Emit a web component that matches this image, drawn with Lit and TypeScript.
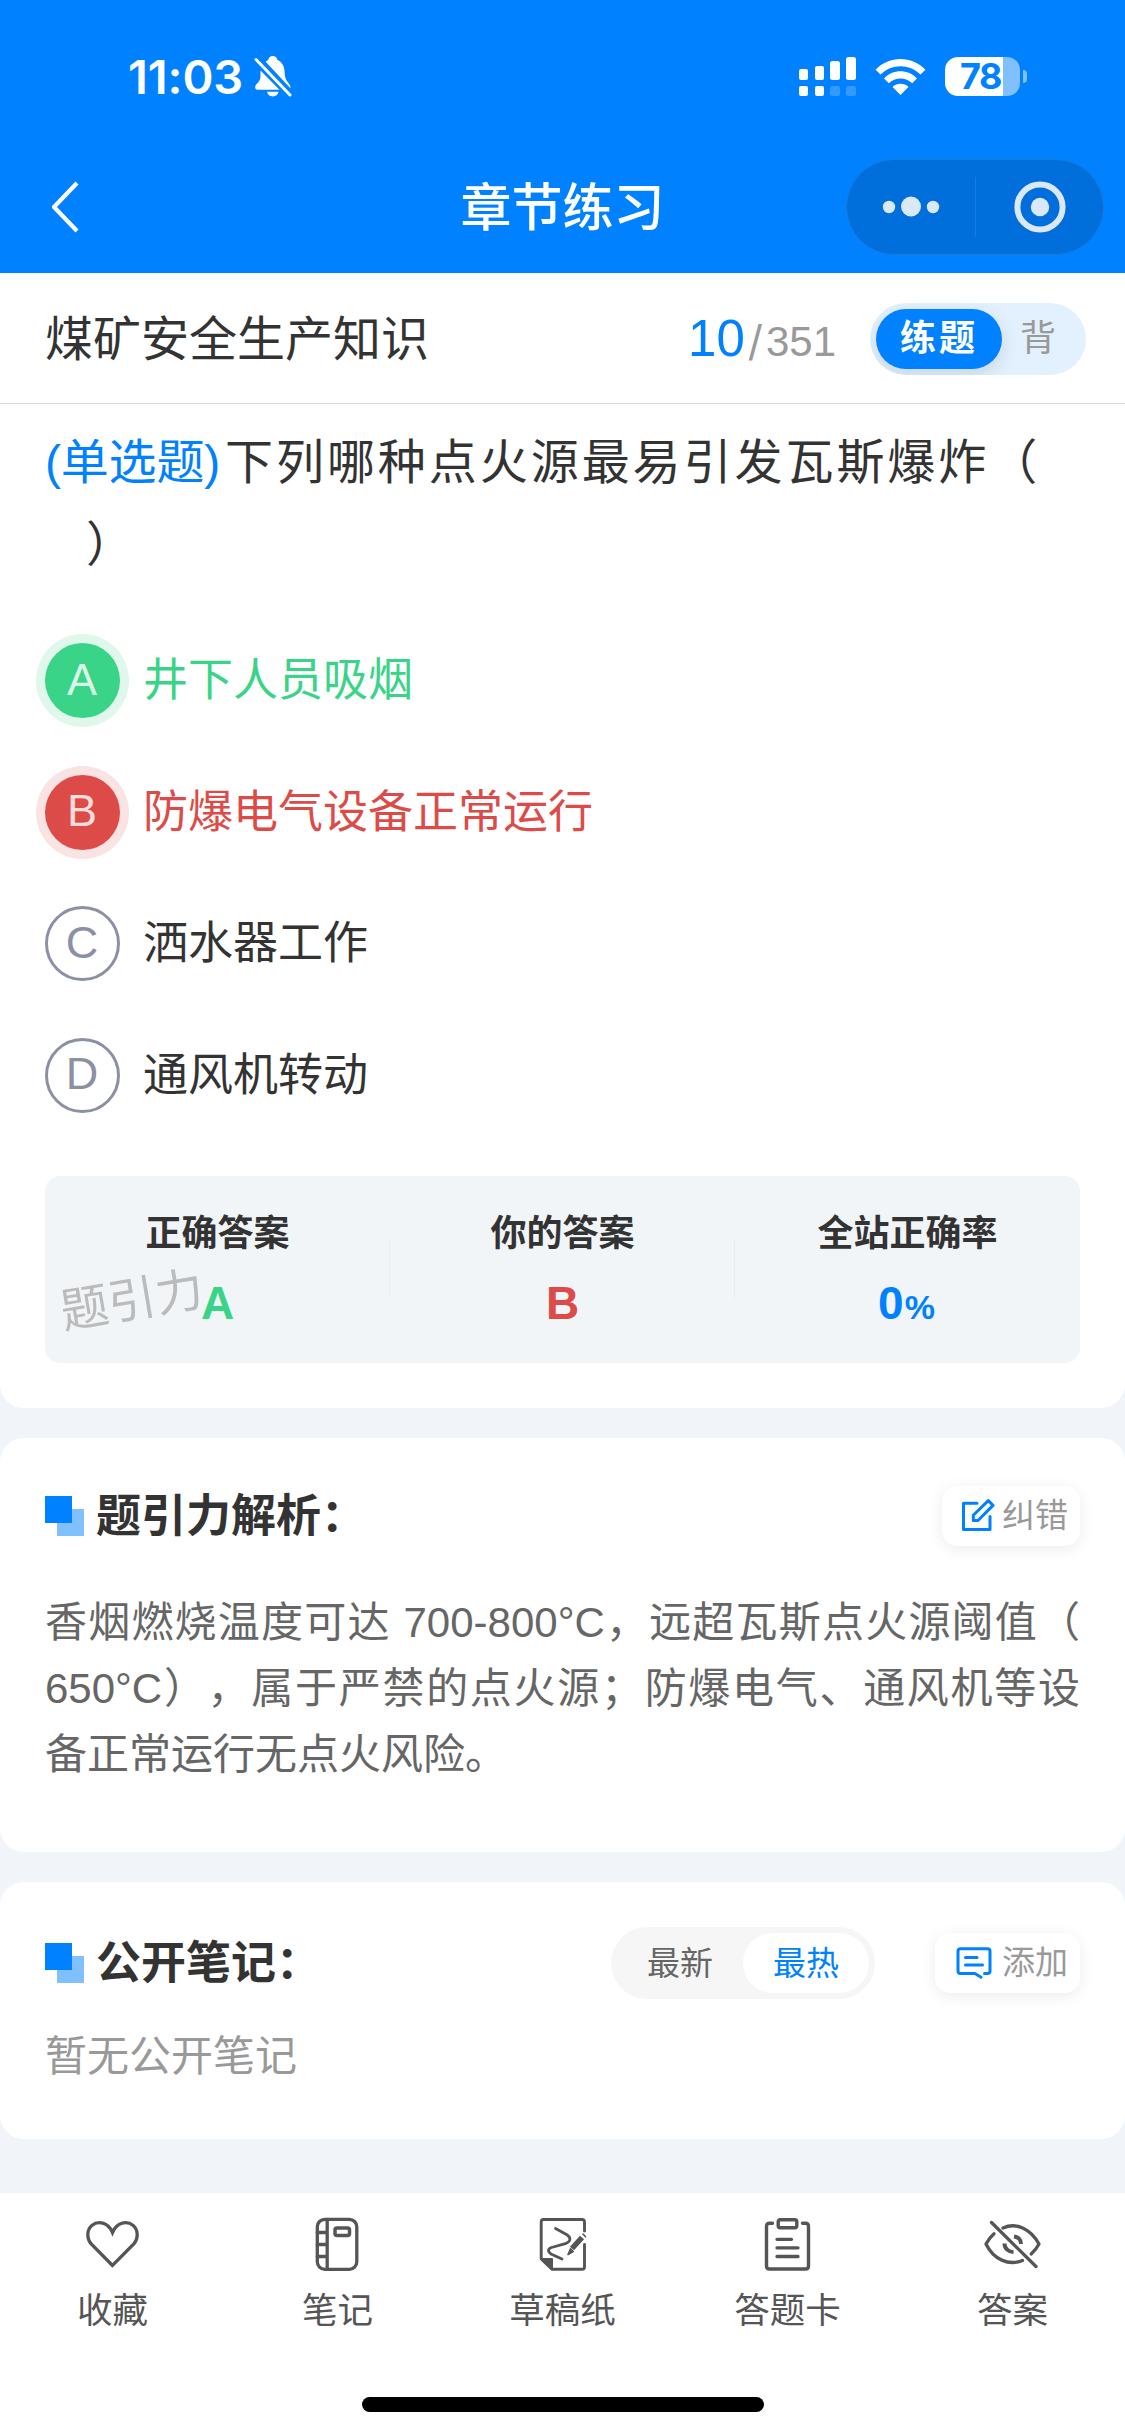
import { LitElement, html, css, svg } from "lit";
import { customElement, state } from "lit/decorators.js";
import { classMap } from "lit/directives/class-map.js";

const bellOff = html`<svg width="38" height="42" viewBox="0 0 38 42">
  <g fill="#fff">
    <path d="M6.500 15.500V22C6.500 25 4.500 27 2.200 29.600C0.300 32.300 1 34.700 3.600 34.700H25.500Z"></path>
    <path d="M11.700 6.800C12.500 6 13.500 5.500 14.200 5C14.800 2 16.500 1 18.800 1C21.200 1 23 2.400 23.400 5C28 7 30.300 11 30.500 16C30.800 21.500 31.500 24.500 34 27.500C35.800 29.600 36.800 31 36.400 33.300Z"></path>
    <path d="M13 36.800H24.600C24 40 21.800 41.400 18.800 41.400C15.800 41.400 13.600 40 13 36.800Z"></path>
  </g>
  <path d="M2 4.500L36 40" stroke="#fff" stroke-width="3" stroke-linecap="round"></path>
</svg>`;

const signal = html`<svg width="57" height="39" viewBox="0 0 57 39" fill="#fff">
  <rect x="0" y="12" width="9" height="11" rx="2"></rect>
  <rect x="16" y="9" width="9" height="14" rx="2"></rect>
  <rect x="31" y="4" width="10" height="19" rx="2.500"></rect>
  <rect x="47" y="0" width="10" height="23" rx="2.500"></rect>
  <rect x="0" y="29" width="9" height="10" rx="2"></rect>
  <rect x="16" y="29" width="9" height="10" rx="2"></rect>
  <rect x="31" y="29" width="10" height="10" rx="2.500" opacity=".2"></rect>
  <rect x="47" y="29" width="10" height="10" rx="2.500" opacity=".2"></rect>
</svg>`;

const wifi = html`<svg width="51" height="37" viewBox="0 0 51 37" fill="#fff">
  <path d="M0.600 11.800C14 -2.600 37 -2.600 50.400 11.800L45.500 16.600C34.500 5.400 16.500 5.400 5.500 16.600Z"></path>
  <path d="M9 20.400C18 11 33 11 42 20.400L37.200 25.200C31 18.800 20 18.800 13.800 25.200Z"></path>
  <path d="M17.500 29C22 24.600 29 24.600 33.500 29L25.500 36.900Z"></path>
</svg>`;

const chevron = html`<svg width="29" height="52" viewBox="0 0 29 52">
  <path d="M26 2L3 26L26 50" fill="none" stroke="#fff" stroke-width="4.200" stroke-linejoin="round"></path>
</svg>`;

const dots = html`<svg width="58" height="22" viewBox="0 0 58 22" fill="#dae8fa">
  <circle cx="7" cy="11" r="6.200"></circle>
  <circle cx="29" cy="10.500" r="10"></circle>
  <circle cx="51" cy="11" r="6.200"></circle>
</svg>`;

const target = html`<svg width="52" height="52" viewBox="0 0 52 52">
  <circle cx="26" cy="26" r="22.600" fill="none" stroke="#dae8fa" stroke-width="6"></circle>
  <circle cx="26" cy="26" r="9.200" fill="#dae8fa"></circle>
</svg>`;

const editIcon = html`<svg width="34" height="34" viewBox="0 0 34 34" fill="none" stroke="#0081ff" stroke-width="3" stroke-linecap="round" stroke-linejoin="round">
  <path d="M16 4.200H2.500V30.600H29V17.500"></path>
  <path d="M27.300 1.600L32 6.400L17 21.500H12.300V16.300Z"></path>
</svg>`;

const commentIcon = html`<svg width="36" height="32" viewBox="0 0 36 32" fill="none" stroke="#0081ff" stroke-width="3" stroke-linecap="round" stroke-linejoin="round">
  <path d="M28.500 26.500H31.500Q34 26.500 34 24V4.500Q34 1.800 31.500 1.800H4.500Q2 1.800 2 4.500V24Q2 26.500 4.500 26.500H19L25 30.200"></path>
  <path d="M9.500 10.600H21M9.500 18H26.500"></path>
</svg>`;

const tabShapes: Record<string, unknown> = {
  heart: svg`<path d="M29.500 51.500L8.200 29.800C3.200 24 4 15.500 8.800 11.500C15 6.500 25 8 29.500 18.500C34 8 44 6.500 50.200 11.500C55 15.500 55.800 24 50.800 29.800Z" stroke-linejoin="miter"></path>`,
  notebook: svg`<rect x="9.300" y="5.300" width="39.500" height="50" rx="7.500"></rect>
    <path d="M19.200 5.300V55.300M9.300 18.500H19.200M9.300 30.500H19.200M9.300 42.500H19.200"></path>
    <rect x="27" y="14" width="14.500" height="7.500" rx="2" stroke-width="3.500"></rect>`,
  draft: svg`<path d="M51.500 17V8Q51.500 5.500 49 5.500H10.500Q8.200 5.500 8.200 8V45L19 55.300H49Q51.500 55.300 51.500 53V30.500" stroke-width="2.900"></path>
    <path d="M8.200 45H19V55.300Z" fill="#555" stroke-width="2"></path>
    <path d="M22.500 14.500L33.500 20.500C39.500 24.500 37 28.500 30.500 30.200L18.500 33.500C14.500 35 14.500 38 18.500 40.200L29 45" stroke-width="2.800"></path>
    <path d="M49 23.500L39 34.500" stroke-width="5.500" stroke-linecap="butt"></path>
    <path d="M35 40.500L37.500 34.800L40.200 37.600ZM50 20L52.500 22.700" fill="#555" stroke-width="1.600"></path>`,
  clipboard: svg`<path d="M14.500 9.300H11.500Q8.500 9.300 8.500 12.300V52Q8.500 55 11.500 55H47.500Q50.500 55 50.500 52V12.300Q50.500 9.300 47.500 9.300H44.500" stroke-width="3.400"></path>
    <rect x="20.200" y="5.700" width="18.600" height="8" rx="2" stroke-width="3.400"></rect>
    <path d="M19 25.300H33.500M19 33.800H40M19 42.500H40" stroke-width="3.300"></path>`,
  eyeOff: svg`<path d="M20 14C33 8 47.500 14.500 56 30C54 33.700 51 37.400 48.200 39.900M39.500 46.500C25.500 52 10.500 45.500 3 30C5 26.200 7.500 22.700 11 19.700"></path>
    <path d="M31 22.500C35.500 23 38 26 38 30M21.500 29.500C21.500 34.500 25.500 38 30.500 38" stroke-width="4" stroke-linecap="butt"></path>
    <path d="M8.500 8.500L53 52.500"></path>`,
};

interface Option { key: string; text: string; mark: "right" | "wrong" | ""; }

@customElement("app-root")
export class AppRoot extends LitElement {
  @state() private options: Option[] = [
    { key: "A", text: "井下人员吸烟", mark: "right" },
    { key: "B", text: "防爆电气设备正常运行", mark: "wrong" },
    { key: "C", text: "洒水器工作", mark: "" },
    { key: "D", text: "通风机转动", mark: "" },
  ];

  private tabs = [
    ["heart", "收藏"],
    ["notebook", "笔记"],
    ["draft", "草稿纸"],
    ["clipboard", "答题卡"],
    ["eyeOff", "答案"],
  ];

  static styles = css`
    :host {
      display: flex;
      flex-direction: column;
      width: 1125px;
      height: 2436px;
      overflow: hidden;
      background: #f1f5f9;
      color: #333;
      font-family: "Liberation Sans", "Noto Sans CJK SC", sans-serif;
      text-spacing-trim: space-all;
    }
    * { box-sizing: border-box; }
    svg { display: block; flex: none; }
    .status {
      height: 143px;
      padding: 9px 98px 0 128px;
      display: flex;
      align-items: center;
      background: #0081ff;
      color: #fff;
      font-family: Inter, sans-serif;
    }
    .time { font-size: 47px; font-weight: 600; line-height: 50px; width: 126px; letter-spacing: -0.1px; white-space: nowrap; padding-top: 1px; }
    .sys { margin-left: auto; display: flex; align-items: center; }
    .sys .wifi { margin: 0 19px 0 19px; }
    .battery {
      width: 75px; height: 39px; border-radius: 13px;
      background: linear-gradient(90deg, #fff 58px, #80c0ff 58px);
      color: #0081ff; font-size: 36px; font-weight: 700; line-height: 39px;
      padding-left: 15px; letter-spacing: -1.500px;
    }
    .nub { width: 4px; height: 13px; margin-left: 3px; border-radius: 0 4px 4px 0; background: #80c0ff; }
    .nav {
      height: 130px;
      padding: 0 21px 2px 51px;
      display: grid;
      grid-template-columns: 258px 1fr 258px;
      align-items: center;
      background: #0081ff;
    }
    .nav-title { color: #fff; font-size: 51px; font-weight: 500; line-height: 60px; padding-top: 3px; text-align: center; white-space: nowrap; margin-right: 30px; }
    .capsule {
      justify-self: end; width: 258px; height: 96px; border-radius: 48px;
      border: 1px solid #1a7bdc; background: #006edb;
      display: grid; grid-template-columns: 128px 1px 1fr; align-items: center; justify-items: center;
    }
    .capsule i { width: 1px; height: 60px; background: #1a7cdf; }
    .subject {
      height: 131px; padding: 2px 39px 0 45px; background: #fff;
      border-bottom: 1px solid #d9d9d9;
      display: flex; align-items: center;
    }
    .subject h1 { margin: 0; flex: 1; font-size: 48px; font-weight: 400; line-height: 60px; padding-top: 2px; }
    .count { display: flex; align-items: baseline; color: #999; font-size: 42px; line-height: 60px; margin-right: 34px; padding-top: 3px; }
    .count b { font-weight: 400; font-size: 51px; color: #0081ff; }
    .count .slash { font-family: Inter, sans-serif; margin: 0 3px; }
    .mode { width: 216px; height: 72px; border-radius: 36px; background: #e3f1ff; padding: 6px; display: flex; overflow: hidden; font-size: 36px; line-height: 60px; color: #999; }
    .mode .on { width: 126px; height: 60px; border-radius: 30px; background: #0081ff; color: #fff; font-weight: 700; letter-spacing: 3px; padding-left: 24px; box-shadow: 0 6px 18px rgba(0,0,0,.12); }
    .mode .off { padding-left: 18px; }
    .card { background: #fff; border-radius: 24px; }
    .card.first { border-radius: 0 0 24px 24px; height: 1004px; padding: 18px 45px 0; }
    .stem { font-size: 48px; line-height: 82px; white-space: pre; letter-spacing: 2.950px; height: 164px; }
    .stem .kind { color: #0081ff; letter-spacing: -0.200px; margin-right: 5px; }
    .stem .indent { padding-left: 41px; display: block; }
    .options { margin-top: 57px; display: flex; flex-direction: column; gap: 56.500px; }
    .option { display: flex; align-items: center; height: 75px; gap: 23px; font-size: 45px; line-height: 60px; }
    .option span + span { padding-top: 1px; }
    .key { width: 75px; height: 75px; border-radius: 50%; border: 3px solid #8b90a5; color: #8b90a5; display: flex; align-items: center; justify-content: center; font-size: 45px; padding: 0 1px 2px 0; }
    .right { color: #39d487; }
    .wrong { color: #dd4b49; }
    .right .key, .wrong .key { border: none; color: rgba(255,255,255,.82); }
    .right .key { background: #39d487; box-shadow: 0 0 0 9px #e0f8eb; }
    .wrong .key { background: #dd4b49; box-shadow: 0 0 0 9px #fae3e3; }
    .stats { position: relative; margin-top: 63.500px; height: 187px; border-radius: 15px; background: #f1f5f8; display: grid; grid-template-columns: repeat(3, 1fr); }
    .stat { display: flex; flex-direction: column; align-items: center; padding-top: 34px; background: linear-gradient(#ebedee, #ebedee) no-repeat right 63px / 1.500px 60px; }
    .stat:last-of-type { background: none; }
    .stat b { font-size: 36px; line-height: 48px; }
    .stat strong { font-size: 46px; line-height: 60px; margin-top: 15px; display: flex; align-items: baseline; }
    .stat small { font-size: 34px; margin-left: 1px; }
    .stat .rate { color: #0081ff; padding-right: 2px; }
    .mark { position: absolute; left: 15px; top: 95px; font-size: 48px; line-height: 60px; color: #bbb; transform: rotate(-9.500deg); }
    .card.explain { margin-top: 30px; height: 414px; padding: 48px 45px 0; }
    .head { display: flex; align-items: center; height: 60px; }
    .head h2 { margin: 0 auto 0 12px; font-size: 45px; line-height: 60px; font-weight: 700; padding-top: 1px; }
    .btn { height: 60px; border-radius: 15px; background: #fff; box-shadow: 0 3px 15px rgba(0,0,0,.08); display: flex; align-items: center; padding: 0 12px 0 19px; gap: 7px; color: #999; font-size: 33px; line-height: 60px; }
    .btn.add { padding-left: 21px; gap: 10px; }
    .btn span, .seg span { padding-top: 0.500px; }
    .text { margin-top: 44px; font-size: 42px; line-height: 66px; color: #666; }
    .text div { text-align: justify; text-align-last: justify; white-space: nowrap; }
    .text div:last-child { text-align-last: left; }
    .card.notes { margin-top: 30px; height: 257px; padding: 45px 45px 0; }
    .notes .head { height: 72px; }
    .seg { width: 264px; height: 72px; border-radius: 36px; background: #f6f6f6; padding: 6px; display: flex; margin-right: 60px; font-size: 33px; line-height: 60px; text-align: center; color: #666; }
    .seg span { flex: 1; height: 60px; }
    .seg .on { background: #fff; color: #0081ff; border-radius: 30px; }
    .empty { margin-top: 28px; font-size: 42px; line-height: 60px; color: #999; }
    .tabbar { margin-top: auto; height: 243px; background: #fff; display: flex; flex-direction: column; align-items: center; }
    .tabs { align-self: stretch; display: grid; grid-template-columns: repeat(5, 1fr); padding-top: 21px; height: 204px; }
    .tab { display: flex; flex-direction: column; align-items: center; color: #555; font-size: 35.500px; line-height: 48px; gap: 13px; }
    .tab svg { fill: none; stroke: #555; stroke-width: 3.300; stroke-linecap: round; stroke-linejoin: round; }
    .home { width: 402px; height: 15px; border-radius: 8px; background: #000; }
  `;

  private squares() {
    return html`<svg width="39" height="40" viewBox="0 0 39 40">
      <rect x="12" y="13" width="27" height="27" fill="#80c0ff"></rect>
      <rect x="0" y="0" width="27" height="27" fill="#0081ff"></rect>
    </svg>`;
  }

  render() {
    return html`
      <div class="status">
        <span class="time">11:03</span>${bellOff}
        <div class="sys">
          ${signal}<span class="wifi">${wifi}</span>
          <div class="battery">78</div><div class="nub"></div>
        </div>
      </div>
      <div class="nav">
        ${chevron}
        <div class="nav-title">章节练习</div>
        <div class="capsule">${dots}<i></i>${target}</div>
      </div>
      <div class="subject">
        <h1>煤矿安全生产知识</h1>
        <div class="count"><b>10</b><span class="slash">/</span>351</div>
        <div class="mode"><span class="on">练题</span><span class="off">背</span></div>
      </div>
      <div class="card first">
        <div class="stem"><span class="kind">(单选题)</span>下列哪种点火源最易引发瓦斯爆炸（<span class="indent">）</span></div>
        <div class="options">
          ${this.options.map(
            (o) => html`<div class=${classMap({ option: true, right: o.mark === "right", wrong: o.mark === "wrong" })}>
              <span class="key">${o.key}</span><span>${o.text}</span>
            </div>`
          )}
        </div>
        <div class="stats">
          <div class="stat"><b>正确答案</b><strong class="right">A</strong></div>
          <div class="stat"><b>你的答案</b><strong class="wrong">B</strong></div>
          <div class="stat"><b>全站正确率</b><strong class="rate">0<small>%</small></strong></div>
          <span class="mark">题引力</span>
        </div>
      </div>
      <div class="card explain">
        <div class="head">
          ${this.squares()}
          <h2>题引力解析：</h2>
          <div class="btn">${editIcon}<span>纠错</span></div>
        </div>
        <div class="text">
          <div>香烟燃烧温度可达 700-800°C，远超瓦斯点火源阈值（</div>
          <div>650°C），属于严禁的点火源；防爆电气、通风机等设</div>
          <div>备正常运行无点火风险。</div>
        </div>
      </div>
      <div class="card notes">
        <div class="head">
          ${this.squares()}
          <h2>公开笔记：</h2>
          <div class="seg"><span>最新</span><span class="on">最热</span></div>
          <div class="btn add">${commentIcon}<span>添加</span></div>
        </div>
        <div class="empty">暂无公开笔记</div>
      </div>
      <div class="tabbar">
        <div class="tabs">
          ${this.tabs.map(
            ([icon, label]) => html`<div class="tab">
              <svg width="60" height="60" viewBox="0 0 60 60">${tabShapes[icon]}</svg><span>${label}</span>
            </div>`
          )}
        </div>
        <div class="home"></div>
      </div>
    `;
  }
}
